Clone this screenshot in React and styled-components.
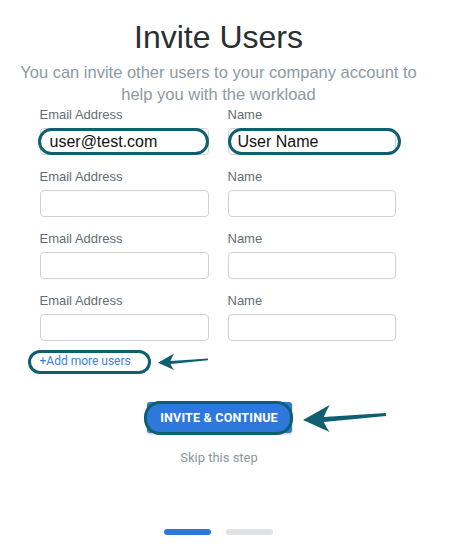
import React from "react";
import styled, { createGlobalStyle } from "styled-components";

const GlobalStyle = createGlobalStyle`
  body {
    margin: 0;
    background: #ffffff;
    font-family: "Liberation Sans", Arial, sans-serif;
  }
`;

const Page = styled.div`
  width: 461px;
  min-height: 547px;
  display: flex;
  flex-direction: column;
  align-items: center;
  padding-top: 17px;
  box-sizing: border-box;
`;

const Title = styled.h1`
  margin: 0 0 0 -24px;
  font-size: 32px;
  line-height: 40px;
  font-weight: 400;
  color: #2a2f33;
`;

const Subtitle = styled.p`
  margin: 4px 0 0 -24px;
  width: 410px;
  text-align: center;
  font-size: 16.5px;
  line-height: 22px;
  color: #8d9aa1;
`;

const Form = styled.div`
  width: 356px;
  margin: 2px 0 0 -26px;
  display: grid;
  grid-template-columns: 169px 168px;
  column-gap: 19px;
  row-gap: 14px;
`;

const Field = styled.div`
  display: flex;
  flex-direction: column;
`;

const Label = styled.label`
  font-size: 13px;
  line-height: 15px;
  color: #5f6d75;
  margin-bottom: 6px;
`;

const InputWrap = styled.div`
  position: relative;
  height: 27px;
`;

const Input = styled.input`
  width: 100%;
  height: 27px;
  box-sizing: border-box;
  border: 1px solid #cfd2d4;
  border-radius: 4px;
  padding: 0 9px;
  font-family: "Liberation Sans", Arial, sans-serif;
  font-size: 16px;
  color: #111;
  background: #fff;
  outline: none;
`;

const Highlight = styled.div`
  position: absolute;
  top: ${(p) => p.$top || 0}px;
  bottom: ${(p) => p.$bottom || 0}px;
  left: ${(p) => p.$left || 0}px;
  right: ${(p) => p.$right || 0}px;
  border: 3px solid #0e5f6f;
  border-radius: ${(p) => p.$radius || 14}px;
  pointer-events: none;
`;

const AddRow = styled.div`
  width: 356px;
  margin: 8px 0 0 -26px;
  position: relative;
  height: 24px;
  display: flex;
  align-items: center;
`;

const AddLink = styled.a`
  position: relative;
  font-family: Roboto, "Liberation Sans", sans-serif;
  font-size: 12px;
  line-height: 15px;
  color: #3a7fe0;
  text-decoration: none;
  cursor: pointer;
`;

const Arrow = styled.svg`
  position: absolute;
  left: ${(p) => p.$left}px;
  top: ${(p) => p.$top}px;
  fill: #0e5f6f;
`;

const ButtonRow = styled.div`
  position: relative;
  margin: 29px 0 0 -23px;
`;

const Button = styled.button`
  position: relative;
  display: block;
  width: 145px;
  height: 31px;
  border: none;
  border-radius: 3px;
  background: #2d78da;
  color: #fff;
  font-family: Roboto, "Liberation Sans", sans-serif;
  font-weight: 700;
  font-size: 12.5px;
  letter-spacing: 0.2px;
  box-shadow: 0 1px 3px rgba(0, 0, 0, 0.25);
  cursor: pointer;
`;

const Skip = styled.div`
  margin: 17px 0 0 -23px;
  font-family: Roboto, "Liberation Sans", sans-serif;
  font-size: 13px;
  line-height: 15px;
  color: #8e969c;
`;

const Dots = styled.div`
  margin: 64px 0 0 -24px;
  display: flex;
  gap: 15px;
`;

const Dot = styled.div`
  width: 47px;
  height: 6px;
  border-radius: 3px;
  background: ${(p) => (p.$active ? "#2d78da" : "#dfe3e6")};
`;

const ArrowShape = ({ width, height, left, top }) => (
  <Arrow width={width} height={height} viewBox="0 0 84 28" preserveAspectRatio="none" $left={left} $top={top}>
    <path d="M0 16 L27 1 Q23 8 21 13 L84 9 L84 12 L21 18 Q23 23 27 28 Z" />
  </Arrow>
);

const rows = [
  { email: "user@test.com", name: "User Name", marked: true },
  { email: "", name: "" },
  { email: "", name: "" },
  { email: "", name: "" },
];

export default function App() {
  return (
    <>
      <GlobalStyle />
      <Page>
        <Title>Invite Users</Title>
        <Subtitle>You can invite other users to your company account to help you with the workload</Subtitle>
        <Form>
          {rows.map((r, i) => (
            <React.Fragment key={i}>
              <Field>
                <Label>Email Address</Label>
                <InputWrap>
                  <Input defaultValue={r.email} />
                  {r.marked && <Highlight $left={-2} $radius={14} />}
                </InputWrap>
              </Field>
              <Field>
                <Label>Name</Label>
                <InputWrap>
                  <Input defaultValue={r.name} />
                  {r.marked && <Highlight $right={-5} $radius={14} />}
                </InputWrap>
              </Field>
            </React.Fragment>
          ))}
        </Form>
        <AddRow>
          <AddLink>
            +Add more users
            <Highlight $top={-4} $bottom={-5} $left={-12} $right={-20} $radius={12} />
          </AddLink>
          <ArrowShape width={50} height={17} left={118} top={4} />
        </AddRow>
        <ButtonRow>
          <Button>INVITE & CONTINUE</Button>
          <Highlight $top={-1} $bottom={-2} $left={-3} $right={-1} $radius={16} />
          <ArrowShape width={83} height={28} left={156} top={2} />
        </ButtonRow>
        <Skip>Skip this step</Skip>
        <Dots>
          <Dot $active />
          <Dot />
        </Dots>
      </Page>
    </>
  );
}
